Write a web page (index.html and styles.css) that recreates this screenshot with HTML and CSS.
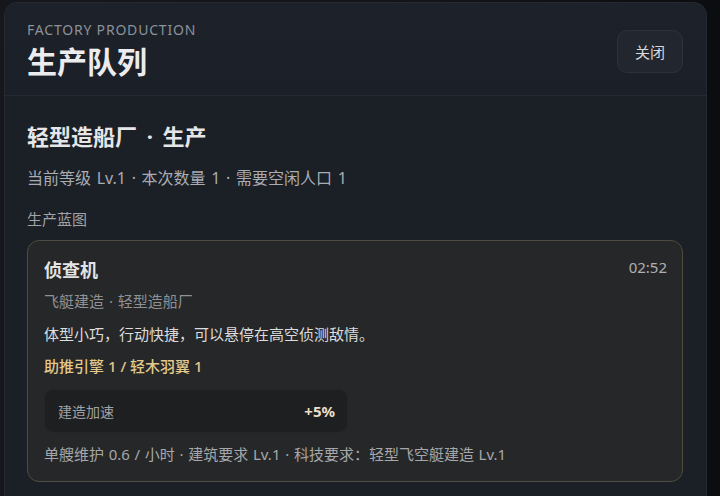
FILE: index.html
```html
<!DOCTYPE html>
<html lang="zh-CN">
<head>
<meta charset="utf-8">
<title>生产队列</title>
<link rel="stylesheet" href="styles.css">
</head>
<body>
<div class="panel">
  <header class="panel-head">
    <div class="head-text">
      <div class="eyebrow">FACTORY PRODUCTION</div>
      <h1 class="title">生产队列</h1>
    </div>
    <button class="close-btn">关闭</button>
  </header>
  <section class="panel-body">
    <h2 class="section-title">轻型造船厂 · 生产</h2>
    <p class="subtitle">当前等级 Lv.1 · 本次数量 1 · 需要空闲人口 1</p>
    <div class="label">生产蓝图</div>
    <div class="card">
      <div class="card-head">
        <div class="card-title">侦查机</div>
        <div class="card-time">02:52</div>
      </div>
      <div class="card-meta">飞艇建造 · 轻型造船厂</div>
      <div class="card-desc">体型小巧，行动快捷，可以悬停在高空侦测敌情。</div>
      <div class="card-cost">助推引擎 1 / 轻木羽翼 1</div>
      <div class="bonus">
        <span class="bonus-name">建造加速</span>
        <span class="bonus-val">+5%</span>
      </div>
      <div class="card-foot">单艘维护 0.6 / 小时 · 建筑要求 Lv.1 · 科技要求：轻型飞空艇建造 Lv.1</div>
    </div>
  </section>
</div>
</body>
</html>
```

FILE: styles.css
```css
* { box-sizing: border-box; }
html, body { height: 100%; }
body {
  margin: 0;
  padding: 2px 13px 0 4px;
  background: linear-gradient(90deg, #15171c 0%, #121419 60%, #0c0d10 100%);
  font-family: "Noto Sans", "Noto Sans CJK SC", sans-serif;
  overflow: hidden;
}
.panel {
  height: 520px;
  background: #1b1f26;
  border: 1px solid #252932;
  border-bottom: none;
  border-radius: 14px 14px 0 0;
}
.panel-head {
  display: flex;
  justify-content: space-between;
  align-items: center;
  padding: 18px 23px 14px 22px;
  border-bottom: 1px solid #262a32;
  background: linear-gradient(180deg, #1d212a 0%, #1b1f27 100%);
  border-radius: 14px 14px 0 0;
}
.eyebrow {
  font-size: 14px;
  line-height: 18px;
  letter-spacing: 0.8px;
  color: #8c919a;
}
.title {
  margin: 4px 0 0;
  font-size: 30px;
  line-height: 38px;
  font-weight: 700;
  color: #ececee;
}
.close-btn {
  width: 66px;
  height: 43px;
  border-radius: 10px;
  background: #22262e;
  border: 1px solid #2d313a;
  color: #d9dadc;
  font-family: inherit;
  font-size: 15px;
  padding: 0;
}
.panel-body {
  padding: 25px 23px 0 22px;
}
.section-title {
  margin: 0;
  font-size: 22px;
  line-height: 30px;
  font-weight: 700;
  word-spacing: 4px;
  color: #e6e6e8;
}
.subtitle {
  margin: 15px 0 0;
  font-size: 16px;
  line-height: 24px;
  word-spacing: 1.5px;
  color: #a9acb2;
}
.label {
  margin-top: 18px;
  font-size: 15px;
  line-height: 22px;
  color: #9fa2a8;
}
.card {
  margin-top: 10px;
  background: #262728;
  border: 1px solid #4e4c40;
  border-radius: 12px;
  padding: 16px 15px 16px 16px;
}
.card-head {
  display: flex;
  justify-content: space-between;
  align-items: flex-start;
}
.card-title {
  font-size: 18px;
  line-height: 26px;
  font-weight: 700;
  color: #e4e4e4;
}
.card-time {
  font-size: 15px;
  line-height: 20px;
  color: #aeb0b3;
}
.card-meta {
  margin-top: 7px;
  font-size: 15px;
  line-height: 22px;
  word-spacing: 1px;
  color: #8f9194;
}
.card-desc {
  margin-top: 11px;
  font-size: 15px;
  line-height: 22px;
  color: #dcdcdc;
}
.card-cost {
  margin-top: 10px;
  font-size: 15px;
  line-height: 22px;
  font-weight: 500;
  color: #e3c98c;
}
.bonus {
  margin-top: 12px;
  width: 304px;
  height: 44px;
  display: flex;
  justify-content: space-between;
  align-items: center;
  padding: 0 12px 0 13px;
  background: #1d1f21;
  border: 1px solid #232527;
  border-radius: 10px;
}
.bonus-name {
  font-size: 14px;
  color: #a0a2a5;
}
.bonus-val {
  font-size: 15px;
  font-weight: 700;
  color: #eadfc6;
}
.card-foot {
  margin-top: 10px;
  font-size: 15px;
  line-height: 22px;
  word-spacing: 0.8px;
  color: #a5a7aa;
}
```
